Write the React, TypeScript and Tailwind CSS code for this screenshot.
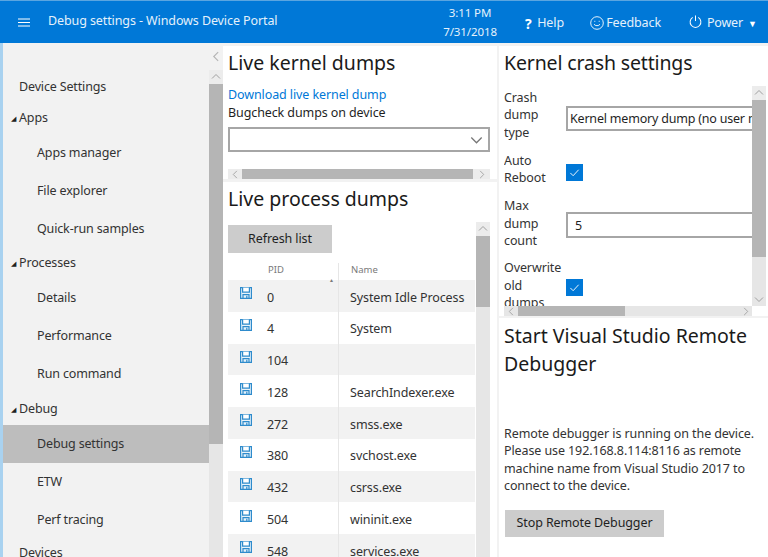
const font = { fontFamily: '"Noto Sans", "Open Sans", sans-serif' };

const navRows = [
  { label: "Device Settings", kind: "top", h: "h-[30px]" },
  { label: "Apps", kind: "group", h: "h-[32px]" },
  { label: "Apps manager", kind: "item" },
  { label: "File explorer", kind: "item" },
  { label: "Quick-run samples", kind: "item" },
  { label: "Processes", kind: "group", h: "h-[31px]" },
  { label: "Details", kind: "item" },
  { label: "Performance", kind: "item" },
  { label: "Run command", kind: "item" },
  { label: "Debug", kind: "group", h: "h-[32px]" },
  { label: "Debug settings", kind: "item", active: true },
  { label: "ETW", kind: "item" },
  { label: "Perf tracing", kind: "item" },
  { label: "Devices", kind: "top", h: "h-[28px]" },
];

const processes = [
  ["0", "System Idle Process"],
  ["4", "System"],
  ["104", ""],
  ["128", "SearchIndexer.exe"],
  ["272", "smss.exe"],
  ["380", "svchost.exe"],
  ["432", "csrss.exe"],
  ["504", "wininit.exe"],
  ["548", "services.exe"],
];

function Chevron({ dir, className }: { dir: "up" | "down" | "left" | "right"; className?: string }) {
  const d = {
    up: "M1 6.5 L5 2.5 L9 6.5",
    down: "M1 3.5 L5 7.5 L9 3.5",
    left: "M6.5 1 L2.5 5 L6.5 9",
    right: "M3.5 1 L7.5 5 L3.5 9",
  }[dir];
  return (
    <svg viewBox="0 0 10 10" className={className} fill="none" stroke="currentColor" strokeWidth={1}>
      <path d={d} />
    </svg>
  );
}

function SaveIcon() {
  return (
    <svg viewBox="0 0 12 12" className="w-3 h-3 mt-[-5px]" fill="none" stroke="#2e8bcc" strokeWidth={1.2}>
      <path d="M0.6 0.6 H11.4 V11.4 H0.6 Z" fill="#e8f3fa" />
      <path d="M2.6 0.6 V5.2 H9.4 V0.6" fill="#ffffff" />
      <path d="M3 11.4 V7.6 H9 V11.4" />
      <path d="M6.8 8.8 V11" />
    </svg>
  );
}

function Checkbox({ className }: { className?: string }) {
  return (
    <div className={`w-[17px] h-[17px] bg-[#0078d7] flex items-center justify-center shrink-0 ${className ?? ""}`}>
      <svg viewBox="0 0 12 12" className="w-[11px] h-[11px]" fill="none" stroke="#ffffff" strokeWidth={1}>
        <path d="M1.5 6.5 L4.5 9.5 L10.5 3" />
      </svg>
    </div>
  );
}

function VScrollTrack({ thumb, className, down }: { thumb: string; className?: string; down?: boolean }) {
  return (
    <div className={`w-[14px] shrink-0 bg-[#e6e6e6] flex flex-col ${className ?? ""}`}>
      <div className="h-[14px] flex items-center justify-center text-[#a0a0a0] bg-[#ececec]">
        <Chevron dir="up" className="w-[10px] h-[10px]" />
      </div>
      <div className={`bg-[#b5b5b5] ${thumb}`} />
      {down && (
        <div className="mt-auto h-[14px] flex items-center justify-center text-[#a0a0a0]">
          <Chevron dir="down" className="w-[10px] h-[10px]" />
        </div>
      )}
    </div>
  );
}

export default function App() {
  return (
    <div className="w-[768px] h-[557px] overflow-hidden flex flex-col bg-[#f2f2f2] text-[#1f1f1f]" style={font}>
      {/* Header */}
      <header className="h-[43px] shrink-0 bg-[#0078d7] border-t border-[#5aa5e0] text-[#e4f1fb] flex items-center whitespace-nowrap">
        <svg viewBox="0 0 12 9" className="w-[12px] h-[9px] ml-[18px] shrink-0" stroke="#ffffff" strokeWidth={1}>
          <path d="M0 1 H12 M0 4.5 H12 M0 8 H12" />
        </svg>
        <span className="ml-[18px] w-[231px] shrink-0 mt-[-2px] text-[12.5px] tracking-[-0.1px]">Debug settings - Windows Device Portal</span>
        <div className="ml-[165px] w-[52px] shrink-0 flex flex-col items-center text-[11.5px] leading-[19px] tracking-[-0.1px]">
          <span>3:11 PM</span>
          <span>7/31/2018</span>
        </div>
        <div className="ml-[29px] w-[39px] shrink-0 mt-[3px] flex items-center justify-between text-[12.5px] tracking-[-0.1px]">
          <span className="font-bold text-[14px] text-white">?</span>
          <span>Help</span>
        </div>
        <div className="ml-[26px] w-[71px] shrink-0 mt-[3px] flex items-center justify-between text-[12.5px] tracking-[-0.1px]">
          <svg viewBox="0 0 14 14" className="w-[14px] h-[14px] mt-[-2px]" fill="none" stroke="#ffffff" strokeWidth={0.9}>
            <circle cx="7" cy="7" r="6.3" />
            <path d="M4 8.2 C5 10.2 9 10.2 10 8.2" />
            <path d="M4.8 4.8 V5.8 M9.2 4.8 V5.8" />
          </svg>
          <span>Feedback</span>
        </div>
        <div className="ml-[28px] shrink-0 mt-[3px] flex items-center gap-[5px] text-[12.5px] tracking-[-0.2px]">
          <svg viewBox="0 0 14 14" className="w-[13px] h-[13px] mt-[-4px]" fill="none" stroke="#ffffff" strokeWidth={1.1}>
            <path d="M4 2.6 A5.8 5.8 0 1 0 10 2.6" />
            <path d="M7 0.5 V6.5" />
          </svg>
          <span>Power</span>
          <span className="text-[9px] text-white">▼</span>
        </div>
      </header>

      <div className="flex-1 flex min-h-0">
        {/* Sidebar */}
        <aside className="w-[223px] shrink-0 flex border-l-[3px] border-[#a9d2f0]">
          <div className="w-[206px] shrink-0 flex flex-col overflow-hidden pt-[29px] text-[12.5px] text-[#333333] tracking-[-0.15px]">
            {navRows.map((row) => (
              <div
                key={row.label}
                className={`shrink-0 flex items-center ${row.kind === "item" ? "h-[38px] pl-[34px]" : row.h + " pl-[16px]"} ${row.active ? "bg-[#bdbdbd]" : ""}`}
              >
                {row.kind === "group" && <span className="ml-[-8px] mr-px w-[7px] text-[7px] leading-none text-[#222222]">◢</span>}
                {row.label}
              </div>
            ))}
          </div>
          <div className="w-[14px] shrink-0 flex flex-col">
            <div className="h-[27px] flex items-center justify-center text-[#b5b5b5]">
              <Chevron dir="left" className="w-[11px] h-[11px]" />
            </div>
            <VScrollTrack thumb="h-[360px]" className="flex-1" />
          </div>
        </aside>

        {/* Main panels */}
        <main className="flex-1 flex gap-[2px] pt-[3px] min-w-0">
          <div className="w-[274px] shrink-0 flex flex-col gap-[3px]">
            <section className="h-[133px] shrink-0 bg-white pl-[5px] pr-[7px] flex flex-col">
              <h2 className="text-[19.5px] leading-[28px] mt-[3px] text-[#1a1a1a]">Live kernel dumps</h2>
              <div className="mt-[9px] text-[12.5px] leading-[17px] tracking-[-0.1px] text-[#0078d7]">Download live kernel dump</div>
              <div className="text-[12.5px] leading-[17px] tracking-[-0.1px] mt-px">Bugcheck dumps on device</div>
              <div className="mt-[6px] h-[25px] border-2 border-[#a6a6a6] flex items-center justify-end pr-[5px] text-[#777777]">
                <Chevron dir="down" className="w-[13px] h-[13px]" />
              </div>
              <div className="mt-[17px] h-[10px] bg-[#ececec] flex items-center text-[#a0a0a0]">
                <div className="w-[14px] flex justify-center"><Chevron dir="left" className="w-[9px] h-[9px]" /></div>
                <div className="flex-1 h-full bg-[#b5b5b5]" />
                <div className="w-[17px] flex justify-center"><Chevron dir="right" className="w-[9px] h-[9px]" /></div>
              </div>
            </section>

            <section className="flex-1 min-h-0 bg-white pl-[5px] pr-[7px] flex flex-col overflow-hidden">
              <h2 className="text-[19.5px] leading-[28px] mt-[3px] shrink-0 text-[#1a1a1a]">Live process dumps</h2>
              <div className="flex flex-1 min-h-0 mt-[9px]">
                <div className="flex-1 min-w-0 pt-[3px] overflow-hidden">
                  <button className="w-[104px] h-[28px] bg-[#cccccc] text-[12.5px] tracking-[-0.1px] block">Refresh list</button>
                  <div className="h-[27px] pt-[10px] flex text-[9.5px] text-[#7a7a7a]">
                    <div className="w-[111px] pl-[40px] relative border-r border-[#e6e6e6]">
                      PID
                      <span className="absolute right-[4px] top-[14px] text-[5px]">▲</span>
                    </div>
                    <div className="pl-[12px]">Name</div>
                  </div>
                  <div className="grid auto-rows-[31.75px] text-[12.5px] tracking-[-0.1px] text-[#333333]">
                    {processes.map(([pid, name], i) => (
                      <div key={pid} className={`flex items-center ${i % 2 === 0 ? "bg-[#f2f2f2]" : "bg-white"}`}>
                        <div className="w-[39px] pl-[12px]"><SaveIcon /></div>
                        <div className="w-[72px] h-full flex items-center pt-[4px] border-r border-[#e6e6e6]">{pid}</div>
                        <div className="pl-[11px] pt-[4px]">{name}</div>
                      </div>
                    ))}
                  </div>
                </div>
                <VScrollTrack thumb="h-[71px]" className="ml-px" />
              </div>
            </section>
          </div>

          <div className="flex-1 min-w-0 flex flex-col gap-[2px]">
            <section className="h-[270px] shrink-0 bg-white pl-[5px] flex flex-col overflow-hidden">
              <h2 className="text-[19.5px] leading-[28px] mt-[3px] shrink-0 text-[#1a1a1a] tracking-[-0.15px]">Kernel crash settings</h2>
              <div className="flex-1 min-h-0 flex mt-[9px] pr-[2px]">
                <div className="flex-1 min-w-0 overflow-hidden text-[12.5px] leading-[17.3px] tracking-[-0.1px] text-[#333333] flex flex-col pt-[3px]">
                  <div className="flex items-start shrink-0">
                    <div className="w-[62px] shrink-0">Crash<br />dump<br />type</div>
                    <div className="mt-[17px] flex-1 min-w-0 h-[25px] border-2 border-r-0 border-[#a6a6a6] pl-[2px] flex items-center whitespace-nowrap overflow-hidden text-[#1f1f1f] tracking-[-0.2px]">
                      Kernel memory dump (no user mode)
                    </div>
                  </div>
                  <div className="flex items-center shrink-0 mt-[11px]">
                    <div className="w-[62px] shrink-0">Auto<br />Reboot</div>
                    <Checkbox className="mt-[6px]" />
                  </div>
                  <div className="flex items-center shrink-0 mt-[11px]">
                    <div className="w-[62px] shrink-0">Max<br />dump<br />count</div>
                    <div className="mt-[4px] flex-1 min-w-0 h-[26px] border-2 border-r-0 border-[#a6a6a6] pl-[7px] flex items-center text-[#1f1f1f]">5</div>
                  </div>
                  <div className="flex items-center shrink-0 mt-[10px]">
                    <div className="w-[62px] shrink-0">Overwrite<br />old<br />dumps</div>
                    <Checkbox className="mt-[4px]" />
                  </div>
                </div>
                <VScrollTrack thumb="h-[157px]" down />
              </div>
              <div className="h-[10px] shrink-0 mr-[16px] bg-[#e6e6e6] flex items-center text-[#a0a0a0]">
                <div className="w-[14px] flex justify-center"><Chevron dir="left" className="w-[9px] h-[9px]" /></div>
                <div className="w-[107px] h-full bg-[#b5b5b5]" />
                <div className="flex-1" />
                <div className="w-[14px] flex justify-center"><Chevron dir="right" className="w-[9px] h-[9px]" /></div>
              </div>
            </section>

            <section className="flex-1 min-h-0 bg-white pl-[5px] pr-[8px] overflow-hidden">
              <h2 className="text-[19.5px] leading-[28px] mt-[4px] text-[#1a1a1a]">Start Visual Studio Remote Debugger</h2>
              <p className="mt-[47px] text-[12.5px] leading-[17.3px] tracking-[-0.1px] text-[#333333]">
                Remote debugger is running on the device. Please use 192.168.8.114:8116 as remote machine name from Visual Studio 2017 to connect to the device.
              </p>
              <button className="mt-[16px] ml-px w-[159px] h-[27px] bg-[#cccccc] text-[12.5px] tracking-[-0.1px] block">Stop Remote Debugger</button>
            </section>
          </div>
        </main>
      </div>
    </div>
  );
}
